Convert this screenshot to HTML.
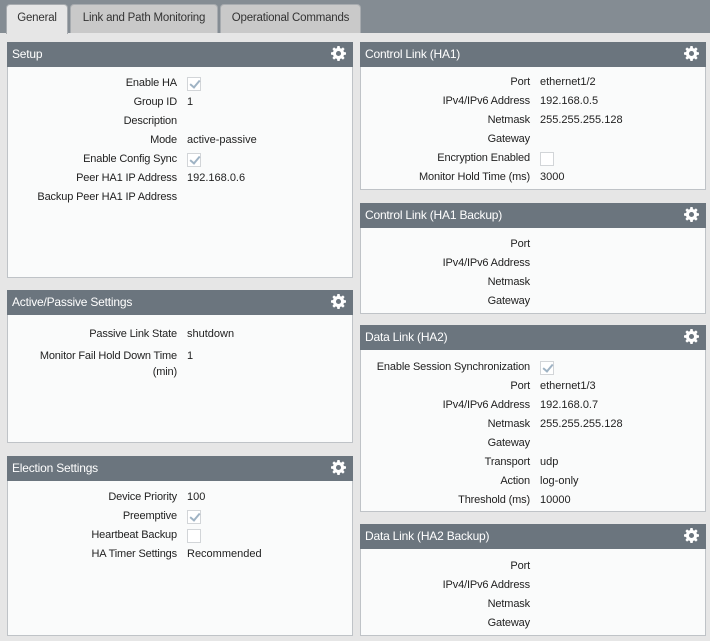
<!DOCTYPE html>
<html><head><meta charset="utf-8"><style>
*{box-sizing:border-box;margin:0;padding:0}
body{width:710px;height:641px;background:#e6e6e6;font-family:"Liberation Sans",sans-serif;font-size:11px;color:#222;position:relative;overflow:hidden}
.top{position:absolute;left:0;top:0;width:710px;height:33px;background:#848c93}
.tab{position:absolute;top:4px;height:29px;background:#c9c9c9;border:1px solid #a7abaf;border-bottom:none;border-radius:4px 4px 0 0;font-size:11.5px;letter-spacing:-0.2px;color:#333;text-align:center;line-height:27px}
.tab.act{background:#e6e6e6;height:30px}
.p{position:absolute;background:#fafbfb;border:1px solid #bfc3c7}
.h{height:25px;background:#6b757e;color:#fff;font-size:12px;letter-spacing:-0.2px;line-height:25px;padding-left:5px;position:relative;margin:-1px -1px 0 -1px}
.g{position:absolute;right:7px;top:4px;width:15px;height:15px}
.b{padding-top:7px}
.r{display:flex;align-items:center;min-height:19px;line-height:19px}
.l{text-align:right;padding-right:10px;flex:none;letter-spacing:-0.15px}
.cb{display:inline-block;width:14px;height:14px;border:1px solid #d2d5d8;background:#fff;position:relative}
.cb.c::after{content:"";position:absolute;left:4px;top:0px;width:4px;height:8px;border:solid #9fb3c4;border-width:0 2px 2px 0;transform:rotate(40deg)}
</style></head><body>
<div class="top"></div>
<div class="tab act" style="left:6px;width:62px">General</div>
<div class="tab" style="left:70px;width:148px">Link and Path Monitoring</div>
<div class="tab" style="left:220px;width:141px">Operational Commands</div>

<svg width="0" height="0" style="position:absolute"><defs><symbol id="gear" viewBox="0 0 16 16"><path fill="#fff" d="M6.8 0h2.4l.4 2.2 1.3.6 1.9-1.3 1.7 1.7-1.3 1.9.6 1.3 2.2.4v2.4l-2.2.4-.6 1.3 1.3 1.9-1.7 1.7-1.9-1.3-1.3.6-.4 2.2H6.8l-.4-2.2-1.3-.6-1.9 1.3-1.7-1.7 1.3-1.9-.6-1.3L0 9.2V6.8l2.2-.4.6-1.3-1.3-1.9 1.7-1.7 1.9 1.3 1.3-.6zM8 5.3A2.7 2.7 0 1 0 8 10.7 2.7 2.7 0 1 0 8 5.3z"/></symbol></defs></svg>

<div class="p" style="left:7px;top:42px;width:346px;height:236px"><div class="h">Setup<svg class="g"><use href="#gear"/></svg></div><div class="b">
<div class="r"><div class="l" style="width:179px">Enable HA</div><span class="cb c"></span></div>
<div class="r"><div class="l" style="width:179px">Group ID</div>1</div>
<div class="r"><div class="l" style="width:179px">Description</div></div>
<div class="r"><div class="l" style="width:179px">Mode</div>active-passive</div>
<div class="r"><div class="l" style="width:179px">Enable Config Sync</div><span class="cb c"></span></div>
<div class="r"><div class="l" style="width:179px">Peer HA1 IP Address</div>192.168.0.6</div>
<div class="r"><div class="l" style="width:179px">Backup Peer HA1 IP Address</div></div>
</div></div>

<div class="p" style="left:7px;top:290px;width:346px;height:153px"><div class="h">Active/Passive Settings<svg class="g"><use href="#gear"/></svg></div><div class="b" style="padding-top:10px">
<div class="r"><div class="l" style="width:179px">Passive Link State</div>shutdown</div>
<div class="r" style="margin-top:4px;line-height:16px;align-items:flex-start"><div class="l" style="width:179px">Monitor Fail Hold Down Time<br>(min)</div>1</div>
</div></div>

<div class="p" style="left:7px;top:456px;width:346px;height:180px"><div class="h">Election Settings<svg class="g"><use href="#gear"/></svg></div><div class="b">
<div class="r"><div class="l" style="width:179px">Device Priority</div>100</div>
<div class="r"><div class="l" style="width:179px">Preemptive</div><span class="cb c"></span></div>
<div class="r"><div class="l" style="width:179px">Heartbeat Backup</div><span class="cb"></span></div>
<div class="r"><div class="l" style="width:179px">HA Timer Settings</div>Recommended</div>
</div></div>

<div class="p" style="left:360px;top:42px;width:346px;height:148px"><div class="h">Control Link (HA1)<svg class="g"><use href="#gear"/></svg></div><div class="b" style="padding-top:6px">
<div class="r"><div class="l" style="width:179px">Port</div>ethernet1/2</div>
<div class="r"><div class="l" style="width:179px">IPv4/IPv6 Address</div>192.168.0.5</div>
<div class="r"><div class="l" style="width:179px">Netmask</div>255.255.255.128</div>
<div class="r"><div class="l" style="width:179px">Gateway</div></div>
<div class="r"><div class="l" style="width:179px">Encryption Enabled</div><span class="cb"></span></div>
<div class="r"><div class="l" style="width:179px">Monitor Hold Time (ms)</div>3000</div>
</div></div>

<div class="p" style="left:360px;top:203px;width:346px;height:111px"><div class="h">Control Link (HA1 Backup)<svg class="g"><use href="#gear"/></svg></div><div class="b" style="padding-top:7px">
<div class="r"><div class="l" style="width:179px">Port</div></div>
<div class="r"><div class="l" style="width:179px">IPv4/IPv6 Address</div></div>
<div class="r"><div class="l" style="width:179px">Netmask</div></div>
<div class="r"><div class="l" style="width:179px">Gateway</div></div>
</div></div>

<div class="p" style="left:360px;top:325px;width:346px;height:187px"><div class="h">Data Link (HA2)<svg class="g"><use href="#gear"/></svg></div><div class="b" style="padding-top:8px">
<div class="r"><div class="l" style="width:179px">Enable Session Synchronization</div><span class="cb c"></span></div>
<div class="r"><div class="l" style="width:179px">Port</div>ethernet1/3</div>
<div class="r"><div class="l" style="width:179px">IPv4/IPv6 Address</div>192.168.0.7</div>
<div class="r"><div class="l" style="width:179px">Netmask</div>255.255.255.128</div>
<div class="r"><div class="l" style="width:179px">Gateway</div></div>
<div class="r"><div class="l" style="width:179px">Transport</div>udp</div>
<div class="r"><div class="l" style="width:179px">Action</div>log-only</div>
<div class="r"><div class="l" style="width:179px">Threshold (ms)</div>10000</div>
</div></div>

<div class="p" style="left:360px;top:524px;width:346px;height:112px"><div class="h">Data Link (HA2 Backup)<svg class="g"><use href="#gear"/></svg></div><div class="b" style="padding-top:8px">
<div class="r"><div class="l" style="width:179px">Port</div></div>
<div class="r"><div class="l" style="width:179px">IPv4/IPv6 Address</div></div>
<div class="r"><div class="l" style="width:179px">Netmask</div></div>
<div class="r"><div class="l" style="width:179px">Gateway</div></div>
</div></div>
</body></html>
